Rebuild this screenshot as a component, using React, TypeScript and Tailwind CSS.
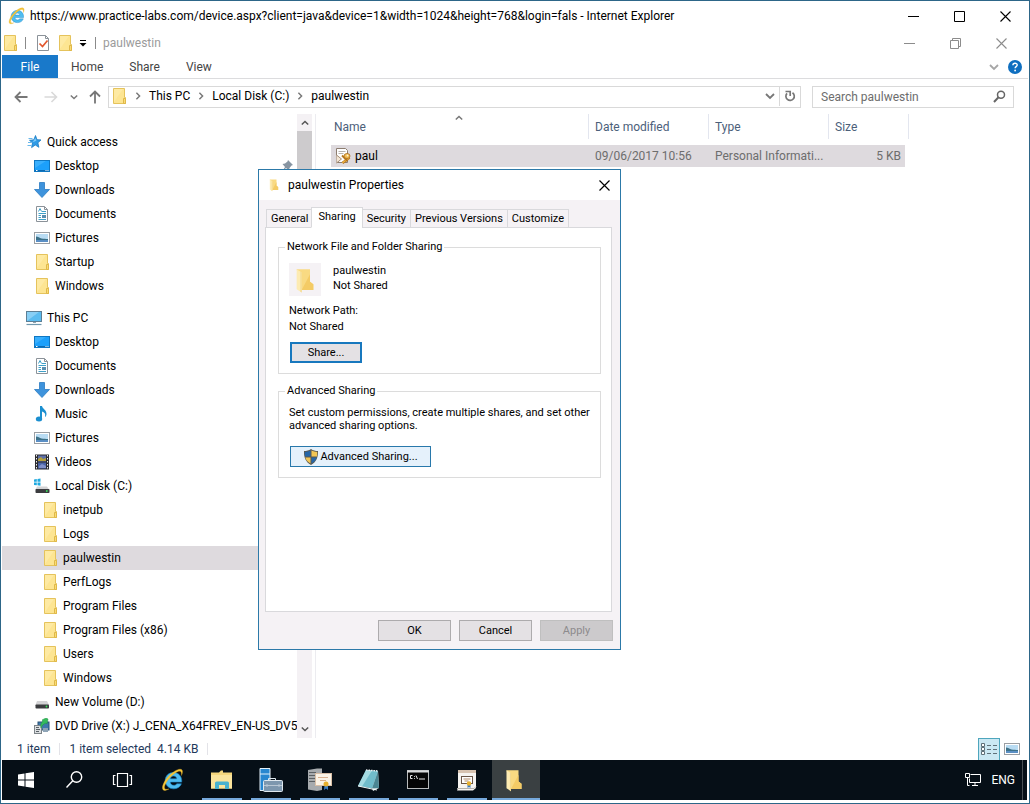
import { useState, type ReactNode } from 'react';
import clsx from 'clsx';

type IconName =
  | 'star'
  | 'desktop'
  | 'download'
  | 'document'
  | 'picture'
  | 'folder'
  | 'pc'
  | 'music'
  | 'video'
  | 'osdisk'
  | 'disk'
  | 'dvd';

type TreeItem = {
  id: string;
  label: string;
  icon: IconName;
  level: 0 | 1 | 2;
  pinned?: boolean;
};

const quickAccess: TreeItem[] = [
  { id: 'quick', label: 'Quick access', icon: 'star', level: 0 },
  { id: 'q-desktop', label: 'Desktop', icon: 'desktop', level: 1, pinned: true },
  { id: 'q-downloads', label: 'Downloads', icon: 'download', level: 1, pinned: true },
  { id: 'q-documents', label: 'Documents', icon: 'document', level: 1, pinned: true },
  { id: 'q-pictures', label: 'Pictures', icon: 'picture', level: 1, pinned: true },
  { id: 'q-startup', label: 'Startup', icon: 'folder', level: 1 },
  { id: 'q-windows', label: 'Windows', icon: 'folder', level: 1 },
];

const thisPc: TreeItem[] = [
  { id: 'pc', label: 'This PC', icon: 'pc', level: 0 },
  { id: 'desktop', label: 'Desktop', icon: 'desktop', level: 1 },
  { id: 'documents', label: 'Documents', icon: 'document', level: 1 },
  { id: 'downloads', label: 'Downloads', icon: 'download', level: 1 },
  { id: 'music', label: 'Music', icon: 'music', level: 1 },
  { id: 'pictures', label: 'Pictures', icon: 'picture', level: 1 },
  { id: 'videos', label: 'Videos', icon: 'video', level: 1 },
  { id: 'c', label: 'Local Disk (C:)', icon: 'osdisk', level: 1 },
  { id: 'inetpub', label: 'inetpub', icon: 'folder', level: 2 },
  { id: 'logs', label: 'Logs', icon: 'folder', level: 2 },
  { id: 'paulwestin', label: 'paulwestin', icon: 'folder', level: 2 },
  { id: 'perflogs', label: 'PerfLogs', icon: 'folder', level: 2 },
  { id: 'pf', label: 'Program Files', icon: 'folder', level: 2 },
  { id: 'pf86', label: 'Program Files (x86)', icon: 'folder', level: 2 },
  { id: 'users', label: 'Users', icon: 'folder', level: 2 },
  { id: 'windows', label: 'Windows', icon: 'folder', level: 2 },
  { id: 'd', label: 'New Volume (D:)', icon: 'disk', level: 1 },
  { id: 'x', label: 'DVD Drive (X:) J_CENA_X64FREV_EN-US_DV5', icon: 'dvd', level: 1 },
];

const iconShapes: Record<IconName, ReactNode> = {
  star: (
    <>
      <path d="M9.500 1.500l1.500 4.200 4 .2-3.100 2.900 1 4.500-3.600-2.300-3.700 2.600.9-4.600-3-2.700 4.300-.5z" fill="#2f9be6" stroke="#1c7cc4" strokeWidth=".8" />
      <path d="M2.500 4.500h4M2 8.500h3M1.500 11.500h4" stroke="#67b7ea" />
      <path d="M9.400 4l1 2.700-3.800 1.500z" fill="#7cc8f5" />
    </>
  ),
  desktop: (
    <>
      <rect x=".5" y="2.500" width="15" height="11" fill="#1ca0fb" stroke="#0f77c2" />
      <path d="M1 10L12 3H1z" fill="#4db9ff" opacity=".6" />
      <path d="M1 12.500h14" stroke="#0a6ab3" />
      <path d="M2 12.500h1.500M11.500 12.500h1M13.500 12.500h1" stroke="#fff" />
    </>
  ),
  download: <path d="M5.500.5h5v7h5L8 15.500.500 7.500h5z" fill="#3e93dc" stroke="#2b7bc1" strokeWidth=".8" />,
  document: (
    <>
      <path d="M2.500.5h8l3 3v12h-11z" fill="#fff" stroke="#8b9299" />
      <path d="M10.500.5v3h3" fill="none" stroke="#8b9299" />
      <path d="M4.500 5.500l1.500-3 1.500 3M8 5.500h4M4.500 7.500H12M4.500 9.500H7M4.500 11.500H7M4.500 13.500H12" fill="none" stroke="#3fa0c8" />
      <rect x="8" y="9" width="4" height="3" fill="#5a8fb0" />
    </>
  ),
  picture: (
    <>
      <rect x=".5" y="2.500" width="15" height="11" fill="#fff" stroke="#9a9ea3" />
      <rect x="2" y="4" width="12" height="8" fill="#b9dcf3" />
      <path d="M2 6.500c2 0 3.500 1.500 5.500 2 2 .4 4.500.3 6.500.5v1.500H2z" fill="#3c7188" />
      <path d="M2 10h12v2H2z" fill="#5b8fc4" />
    </>
  ),
  folder: (
    <>
      <path d="M2.500.5h11v9h1v6h-12z" fill="#fde592" stroke="#e5c35c" />
      <path d="M12.500 10.500h2v5h-2z" fill="#fbdc74" stroke="#dfb84a" />
      <path d="M3 14L12 1H3z" fill="#fff0b4" opacity=".5" />
    </>
  ),
  pc: (
    <>
      <rect x=".5" y="1.500" width="15" height="10" fill="#5bbcf0" stroke="#5d7f95" />
      <path d="M1 11L13 2H1z" fill="#a6dcf8" opacity=".6" />
      <path d="M7 12.500h3" stroke="#8ea4b1" />
      <path d="M.5 14.500h15" stroke="#6f97ad" strokeWidth="1.200" />
    </>
  ),
  music: (
    <>
      <ellipse cx="5" cy="13" rx="3.200" ry="2.500" fill="#1b8fd0" />
      <path d="M6 0h2c.5 3 5 4 4.500 8.500C12 11 11 11 11 10.500 12 7 9.500 6 8 5.500V13H6z" fill="#1b8fd0" />
    </>
  ),
  video: (
    <>
      <rect x="1" y=".5" width="14" height="15" fill="#2b2b2f" />
      <rect x="4" y="1.500" width="8" height="6" fill="#5d6fa8" />
      <rect x="4" y="8.500" width="8" height="6" fill="#4a63a5" />
      <path d="M4 5l3-2 2 2 3-1v3H4z" fill="#b5a03a" />
      <path d="M5 12l3-2 4 2v2H5z" fill="#7f8fc9" />
      <path d="M2.500 1v15M13.500 1v15" stroke="#f0f0f0" strokeDasharray="1.500 1.500" />
    </>
  ),
  osdisk: (
    <>
      <path d="M0 1.500l2.800-.5v2.800H0zM3.500 1l3-.5v3.300h-3zM0 4.500h2.800v2.800L0 6.900zM3.500 4.500h3v3.200l-3-.4z" fill="#1fa9df" />
      <path d="M3 8.500h10l2 3H1.500z" fill="#d3d3d5" />
      <rect x="1.500" y="11" width="14" height="4" rx=".8" fill="#3b3c3f" />
      <circle cx="12.800" cy="13" r=".9" fill="#39e05b" />
    </>
  ),
  disk: (
    <>
      <path d="M3 7h10l2 4H1.500z" fill="#d3d3d5" />
      <rect x="1.500" y="10.500" width="13.500" height="4" rx=".8" fill="#3b3c3f" />
      <circle cx="12.500" cy="12.500" r=".9" fill="#39e05b" />
    </>
  ),
  dvd: (
    <>
      <rect x="4" y="4" width="11" height="8" fill="#3f78ab" stroke="#2b5378" />
      <rect x="9" y="10" width="5" height="4" fill="#8ea4b6" />
      <rect x=".5" y="7.500" width="7" height="8" fill="#dcdfe1" stroke="#7d8489" />
      <path d="M2 9.500h3M2 11.500h4M2 13.500h3" stroke="#596066" />
      <path d="M12 0L8 2l1 1c-2 2-3 4-2 7 1-3 3-4 5-5l1 1 1-5z" fill="#35bb5c" stroke="#1f9244" strokeWidth=".5" />
    </>
  ),
};

function Icon({ name }: { name: IconName }) {
  return (
    <svg viewBox="0 0 16 16" className="h-4 w-4 shrink-0" aria-hidden="true">
      {iconShapes[name]}
    </svg>
  );
}

function IeLogo({ className }: { className: string }) {
  return (
    <svg viewBox="0 0 24 24" className={className} aria-hidden="true">
      <path
        d="M12.500 4.500c-4.800 0-8.300 3.500-8.300 8s3.500 8.300 8.500 8.300c3.600 0 6.500-1.800 7.700-5h-4.700c-.6 1-1.600 1.500-2.900 1.500-2 0-3.400-1.200-3.500-3.200h11.400c.5-5.600-3-9.600-8.200-9.600zM9.400 10.800c.3-1.700 1.500-2.700 3.200-2.700s2.900 1 3.100 2.700z"
        fill="#4fbdf0"
        stroke="#1a86c9"
        strokeWidth=".6"
      />
      <path
        d="M20.500 7.500c1.600-3.300 1.300-5.600-.4-6.200-2.500-.8-7.600 1.800-12 6.300C3.300 12.500.5 18.500 1.700 21.200c.9 1.900 3.500 1.400 6.300-.3-2.100.6-3.800.6-4.300-.5-.8-1.900 1.300-6.500 5.300-10.900 3.900-4.200 8.300-6.800 10.200-6.200 1.100.4 1.500 1.900 1.300 4.200z"
        fill="#f5c63a"
        stroke="#d9a520"
        strokeWidth=".3"
      />
    </svg>
  );
}

function OpenFolder({ className }: { className: string }) {
  return (
    <svg viewBox="0 0 24 32" className={className} aria-hidden="true">
      <path d="M2 3h16v15l4 3v7H7z" fill="#f9da82" />
      <path d="M8 28L18 9v9l4 3v7z" fill="#f4cb65" />
      <path d="M2 3l6 4v24l-6-4z" fill="#fdebb2" />
      <path d="M8 7v24l-1.500-1V6z" fill="#f3d98f" />
    </svg>
  );
}

function Shield() {
  return (
    <svg viewBox="0 0 16 16" className="h-4 w-4" aria-hidden="true">
      <path d="M8 0c2 1.500 4.500 2 7 2 .3 6-1.500 11-7 14C2.500 13 .7 8 1 2c2.500 0 5-.5 7-2z" fill="#5c5a50" />
      <path d="M7.500 1.500v6H2c-.2-1.500-.3-3-.2-4.600 2-.1 4-.5 5.700-1.400z" fill="#2667a8" />
      <path d="M8.500 1.500c1.700.9 3.700 1.300 5.700 1.400.1 1.600 0 3.100-.2 4.600H8.500z" fill="#f2c655" />
      <path d="M2.200 8.500h5.300v6C4.700 13 3 11 2.200 8.500z" fill="#f2c655" />
      <path d="M13.800 8.500H8.500v6c2.800-1.500 4.500-3.500 5.300-6z" fill="#2667a8" />
    </svg>
  );
}

function Chevron({ dir, className }: { dir: 'up' | 'down' | 'right'; className: string }) {
  const d = { up: 'M1 7l4-4 4 4', down: 'M1 3l4 4 4-4', right: 'M3 1l4 4-4 4' }[dir];
  return (
    <svg viewBox="0 0 10 10" className={clsx('shrink-0', className)} aria-hidden="true">
      <path d={d} fill="none" stroke="currentColor" strokeWidth="1.800" />
    </svg>
  );
}

function WindowButtons({ restored }: { restored?: boolean }) {
  const cell = 'flex h-full w-[46px] items-center justify-center';
  return (
    <div className={clsx('ml-auto flex h-full', restored ? 'mr-1 text-[#8c8c8c]' : 'text-black')}>
      <button className={cell} aria-label="Minimize">
        <svg viewBox="0 0 11 11" className="h-[11px] w-[11px]">
          <path d="M0 5.500h11" stroke="currentColor" />
        </svg>
      </button>
      <button className={cell} aria-label={restored ? 'Restore' : 'Maximize'}>
        <svg viewBox="0 0 11 11" className="h-[11px] w-[11px]" fill="none" stroke="currentColor">
          {restored ? <path d="M.5 2.500h8v8h-8zM2.500 2.500v-2h8v8h-2" /> : <path d="M.5.5h10v10H.5z" />}
        </svg>
      </button>
      <button className={cell} aria-label="Close">
        <svg viewBox="0 0 11 11" className="h-[11px] w-[11px]">
          <path d="M.5.5l10 10M10.500.5l-10 10" stroke="currentColor" strokeWidth="1.100" />
        </svg>
      </button>
    </div>
  );
}

function TreeRow({ item, selected, onSelect }: { item: TreeItem; selected: boolean; onSelect: () => void }) {
  return (
    <li>
      <button
        onClick={onSelect}
        className={clsx(
          'flex h-6 w-full items-center gap-[5px] pr-1 text-left whitespace-nowrap',
          item.level === 0 && 'pl-6',
          item.level === 1 && 'pl-8',
          item.level === 2 && 'pl-10',
          selected && 'bg-[#dedade]',
        )}
      >
        <Icon name={item.icon} />
        <span>{item.label}</span>
        {item.pinned && (
          <svg viewBox="0 0 12 12" className="ml-auto h-3 w-3" aria-hidden="true">
            <path d="M7 0l5 5-1.500.5L8.500 8l-.5 2.500L5 8l-4 4 3-5L1.500 4 4 3.500 6.500 1.500z" fill="#8794a1" />
          </svg>
        )}
      </button>
    </li>
  );
}

function Toolbar() {
  return (
    <>
      <div className="flex h-6 items-center">
        <button aria-label="System menu"><Icon name="folder" /></button>
        <span className="ml-[7px] h-3 w-px bg-[#8a8a8a]" />
        <button aria-label="Properties" className="ml-[9px]">
          <svg viewBox="0 0 16 16" className="h-4 w-4">
            <path d="M2.500.5h8l3 3v12h-11z" fill="#fff" stroke="#8b9299" />
            <path d="M10.500.5v3h3" fill="none" stroke="#8b9299" />
            <path d="M4.500 8.500l3 3 5-6" fill="none" stroke="#e2562c" strokeWidth="1.700" />
          </svg>
        </button>
        <button aria-label="New folder" className="ml-[6px]"><Icon name="folder" /></button>
        <button aria-label="Customize toolbar" className="ml-[6px]">
          <svg viewBox="0 0 8 8" className="h-2 w-2">
            <path d="M1 1.500h6" stroke="#000" />
            <path d="M.5 4h7L4 7.500z" fill="#000" />
          </svg>
        </button>
        <span className="ml-2 h-3 w-px bg-[#8a8a8a]" />
        <span className="ml-[7px] text-[#9b9b9b]">paulwestin</span>
        <WindowButtons restored />
      </div>
      <nav className="flex h-6 items-stretch border-b border-[#dcdcde] pr-[6px] text-[#444]">
        <button className="w-14 bg-[#1979ca] text-white">File</button>
        <button className="px-[13px]">Home</button>
        <button className="px-[13px]">Share</button>
        <button className="px-[13px]">View</button>
        <button aria-label="Expand ribbon" className="ml-auto text-[#a6a6a6]"><Chevron dir="down" className="h-2.5 w-2.5" /></button>
        <button aria-label="Help" className="ml-[9px]">
          <svg viewBox="0 0 14 14" className="h-3.5 w-3.5">
            <circle cx="7" cy="7" r="7" fill="#0f6fc0" />
            <path d="M4.900 5.300c0-2.800 4.400-2.600 4.300-.2 0 1.500-2.100 1.600-2.100 3.200" fill="none" stroke="#fff" strokeWidth="1.400" />
            <circle cx="7.100" cy="10.500" r=".9" fill="#fff" />
          </svg>
        </button>
      </nav>
    </>
  );
}

function AddressBar() {
  return (
    <div className="flex h-[35px] items-center pr-[14px] pl-3 text-[#7a7a7a]">
      <button aria-label="Back">
        <svg viewBox="0 0 14 12" className="h-3 w-3.5" fill="none" stroke="#777" strokeWidth="1.800">
          <path d="M13.500 6H2M6.500 1l-5 5 5 5" />
        </svg>
      </button>
      <button aria-label="Forward" className="ml-4">
        <svg viewBox="0 0 14 12" className="h-3 w-3.5" fill="none" stroke="#d9d9d9" strokeWidth="1.600">
          <path d="M.5 6H12M7.500 1l5 5-5 5" />
        </svg>
      </button>
      <button aria-label="Recent locations" className="ml-3"><Chevron dir="down" className="h-2 w-2" /></button>
      <button aria-label="Up" className="ml-[11px]">
        <svg viewBox="0 0 12 14" className="h-3.5 w-3" fill="none" stroke="#777" strokeWidth="1.800">
          <path d="M6 13.500V2M1 6.500l5-5 5 5" />
        </svg>
      </button>
      <div className="ml-[7px] flex h-[22px] flex-1 items-center border border-[#d9d9d9] pb-px pl-[2px] text-black">
        <Icon name="folder" />
        <Chevron dir="right" className="mx-[7px] h-2 w-2 text-[#777]" />
        <button>This PC</button>
        <Chevron dir="right" className="mx-[7px] h-2 w-2 text-[#777]" />
        <button>Local Disk (C:)</button>
        <Chevron dir="right" className="mx-[7px] h-2 w-2 text-[#777]" />
        <button>paulwestin</button>
        <button aria-label="Previous locations" className="mr-1 ml-auto text-[#777]"><Chevron dir="down" className="h-2.5 w-2.5" /></button>
        <button aria-label="Refresh" className="flex h-5 w-[21px] items-center justify-center border-l border-[#d9d9d9]">
          <svg viewBox="0 0 12 12" className="h-3 w-3" fill="none" stroke="#777" strokeWidth="1.700">
            <path d="M8.500 2.800A4.200 4.200 0 1 1 3 3.400" />
            <path d="M1.500 1.500h4.700V6" />
          </svg>
        </button>
      </div>
      <label className="ml-[11px] flex h-[22px] w-[202px] items-center border border-[#d9d9d9] pr-[7px] pl-2">
        <input
          type="text"
          aria-label="Search"
          placeholder="Search paulwestin"
          className="min-w-0 flex-1 outline-none placeholder:text-[#6d6d6d]"
        />
        <svg viewBox="0 0 13 13" className="h-[13px] w-[13px]" fill="none" stroke="#666" strokeWidth="1.500">
          <circle cx="8" cy="4.800" r="3.500" />
          <path d="M5.500 7.300L1 12" strokeWidth="2" />
        </svg>
      </label>
    </div>
  );
}

function FileTable() {
  const head = 'flex h-[25px] items-center border-r border-[#e3e6ef]';
  return (
    <table className="w-[577px] table-fixed border-separate border-spacing-0 text-left">
      <colgroup>
        <col className="w-[258px]" />
        <col className="w-[120px]" />
        <col className="w-[120px]" />
        <col className="w-[80px]" />
      </colgroup>
      <thead className="text-[#4c607a]">
        <tr>
          <th className="relative p-0 pb-[6px] font-normal">
            <div className={clsx(head, 'pl-[3px]')}>Name</div>
            <Chevron dir="up" className="absolute top-0 left-[124px] h-2 w-2 text-[#777]" />
          </th>
          <th className="p-0 pb-[6px] font-normal"><div className={clsx(head, 'pl-[6px]')}>Date modified</div></th>
          <th className="p-0 pb-[6px] font-normal"><div className={clsx(head, 'pl-[6px]')}>Type</div></th>
          <th className="p-0 pb-[6px] font-normal"><div className={clsx(head, 'pl-[6px]')}>Size</div></th>
        </tr>
      </thead>
      <tbody>
        <tr className="h-[22px] text-[#6d6d6d] [&>td]:bg-[#dedade] [&>td]:p-0">
          <td>
            <span className="flex items-center gap-1 pl-1 text-black">
              <svg viewBox="0 0 16 16" className="h-4 w-4" aria-hidden="true">
                <path d="M1.500.5h9l2 2v12h-11z" fill="#fff" stroke="#8c7d70" />
                <path d="M3.500 3.500h7M3.500 5.500h5" stroke="#b9b4ae" />
                <path d="M1.500 7l5 4-5 4" fill="#f3e6d5" stroke="#a58c74" />
                <path d="M14.500 9.500L7.500 15" stroke="#b5761d" strokeWidth="2.600" />
                <path d="M14 10L7.500 14.700" stroke="#f0b648" strokeWidth="1.200" />
                <path d="M7 7.500l5.500 5.500" stroke="#b5761d" strokeWidth="1.800" />
                <ellipse cx="12" cy="8" rx="3" ry="2.500" fill="#f3be55" stroke="#a8691a" strokeWidth=".8" />
                <circle cx="12.500" cy="7.500" r=".9" fill="#fff2d0" />
              </svg>
              paul
            </span>
          </td>
          <td><span className="pl-[6px]">09/06/2017 10:56</span></td>
          <td><span className="pl-[6px]">Personal Informati...</span></td>
          <td className="border-r-4 border-transparent bg-clip-padding text-right"><span className="pr-1">5 KB</span></td>
        </tr>
      </tbody>
    </table>
  );
}

const tabs = ['General', 'Sharing', 'Security', 'Previous Versions', 'Customize'];

function PropertiesDialog() {
  const [tab, setTab] = useState('Sharing');
  const button = 'h-[21px] w-[73px] border';
  return (
    <section
      role="dialog"
      aria-label="paulwestin Properties"
      className="absolute top-[55px] left-64 w-[363px] border border-[#2c79a8] bg-[#f5f2f5] text-[11px] leading-[15px] text-black"
    >
      <header className="flex h-[30px] items-center bg-white px-[10px] text-[12px]">
        <OpenFolder className="h-3.5 w-2.5" />
        <h2 className="ml-[9px]">paulwestin Properties</h2>
        <button aria-label="Close" className="ml-auto">
          <svg viewBox="0 0 11 11" className="h-[11px] w-[11px]">
            <path d="M.5.5l10 10M10.500.5l-10 10" stroke="#000" strokeWidth="1.200" />
          </svg>
        </button>
      </header>
      <div className="pt-[7px] pr-2 pb-2 pl-[6px]">
        <div role="tablist" className="relative z-10 -mb-px flex items-end px-px">
          {tabs.map((name) => (
            <button
              key={name}
              role="tab"
              aria-selected={tab === name}
              onClick={() => setTab(name)}
              className={clsx(
                'border border-[#d9d9dc]',
                tab === name ? '-mx-px h-[21px] border-b-white bg-white px-[6px] pb-[2px]' : 'h-[19px] px-1 not-last:border-r-0',
              )}
            >
              {name}
            </button>
          ))}
        </div>
        <div role="tabpanel" className="flex h-[385px] flex-col gap-[10px] border border-[#d9d9dc] bg-white pt-3 pr-[10px] pl-3">
          <fieldset className="border border-[#dcdcdc] px-[10px] pb-[10px]">
            <legend className="-ml-1 px-[2px] leading-[14px]">Network File and Folder Sharing</legend>
            <div className="mt-[9px] flex items-start gap-3">
              <div className="flex h-[33px] w-8 items-center justify-center bg-[#f5f2f5]">
                <OpenFolder className="h-7 w-5" />
              </div>
              <p>
                paulwestin
                <br />
                Not Shared
              </p>
            </div>
            <p className="mt-[7px] leading-4">
              Network Path:
              <br />
              Not Shared
            </p>
            <button className="mt-[7px] ml-px h-[21px] w-[72px] border-2 border-[#1878be] bg-[#e4e1e4]">Share...</button>
          </fieldset>
          <fieldset className="border border-[#dcdcdc] px-[10px] pb-[10px]">
            <legend className="-ml-1 px-[2px] leading-[14px]">Advanced Sharing</legend>
            <p className="mt-2 leading-[13px]">Set custom permissions, create multiple shares, and set other advanced sharing options.</p>
            <button className="mt-[14px] ml-px flex h-[21px] w-[141px] items-center justify-center gap-px border border-[#2878ab] bg-[#e5f1fb]">
              <Shield />
              Advanced Sharing...
            </button>
          </fieldset>
        </div>
        <div className="-mr-px mt-2 flex justify-end gap-2">
          <button className={clsx(button, 'border-[#adabad] bg-[#e4e1e4]')}>OK</button>
          <button className={clsx(button, 'border-[#adabad] bg-[#e4e1e4]')}>Cancel</button>
          <button disabled className={clsx(button, 'border-[#bfbfbf] bg-[#cccacc] text-[#8d8b8d]')}>Apply</button>
        </div>
      </div>
    </section>
  );
}

function StatusBar() {
  return (
    <footer className="flex h-[22px] items-center pr-2 pl-[15px] text-[#1e395b]">
      <span>1 item</span>
      <span className="mx-[9px] h-3 w-px bg-[#e3e3e8]" />
      <span>1 item selected</span>
      <span className="ml-[6px]">4.14 KB</span>
      <span className="ml-[9px] h-3 w-px bg-[#e3e3e8]" />
      <button aria-label="Details view" className="ml-auto flex h-[23px] w-[22px] items-center justify-center border border-[#4ea6bd] bg-[#cbe8f3]">
        <svg viewBox="0 0 16 13" className="h-[13px] w-4" fill="none" stroke="#5f7079">
          <path d="M.5.5h3v3h-3zM.5 4.500h3v3h-3zM.5 8.500h3v3h-3z" fill="#fff" />
          <path d="M6 2.500h4M12 2.500h4M6 6.500h4M12 6.500h4M6 10.500h4M12 10.500h4" />
        </svg>
      </button>
      <button aria-label="Thumbnail view" className="ml-1"><Icon name="picture" /></button>
    </footer>
  );
}

type TaskItem = { name: string; state?: 'running' | 'active'; art: ReactNode };

const taskItems: TaskItem[] = [
  {
    name: 'Start',
    art: <path d="M4 6.500l6.500-1v6H4zM11.500 5.300L20 4v7.500h-8.500zM4 12.500h6.500v6l-6.500-1zM11.500 12.500H20V20l-8.500-1.300z" fill="#fff" />,
  },
  {
    name: 'Search',
    art: (
      <g fill="none" stroke="#fff" strokeWidth="1.400">
        <circle cx="13.500" cy="9" r="5.200" />
        <path d="M9.800 12.700L3.500 19.500" />
      </g>
    ),
  },
  {
    name: 'Task View',
    art: <path d="M5.500 5.500h10v13h-10zM3.500 7.500h-2v9h2M17.500 7.500h2v9h-2" fill="none" stroke="#fff" strokeWidth="1.200" />,
  },
  { name: 'Internet Explorer', art: <IeLogo className="h-6 w-6" /> },
  {
    name: 'File Explorer',
    state: 'running',
    art: (
      <>
        <path d="M1 4.500h8l2-2h2v2h9v16H1z" fill="#f5d67c" />
        <path d="M1 7h21v13.500H1z" fill="#fbe49c" />
        <path d="M5 21v-6q0-1.500 1.500-1.500h11q1.500 0 1.500 1.500v6h-4v-4h-6v4z" fill="#49b2cf" />
      </>
    ),
  },
  {
    name: 'Server Manager',
    state: 'running',
    art: (
      <>
        <path d="M1 .5h10v22H1z" fill="#2787d0" stroke="#e3f1fb" />
        <path d="M1 6h10" stroke="#e3f1fb" />
        <path d="M9.500 12.500v-2h7v2" fill="none" stroke="#dfe8ef" />
        <rect x="4.500" y="12.500" width="19" height="11" rx="1" fill="#7d97ae" stroke="#dfe8ef" />
        <path d="M5 17.500h18M8 16v3M20 16v3" stroke="#b9c7d4" />
      </>
    ),
  },
  {
    name: 'Certification Authority',
    state: 'running',
    art: (
      <>
        <path d="M0 2l9-1.500h5V22L9 23l-9-1.500z" fill="#a7abae" />
        <path d="M1 4.500h7M1 7.500h7M1 10.500h7M1 13.500h7" stroke="#5c6164" />
        <rect x="7.500" y="5.500" width="16" height="12" fill="#fbf3e6" stroke="#d9bfa6" />
        <path d="M10 9.500h10M12 12.500h6" stroke="#d9b08e" />
        <path d="M16.500 17l-.5 5 2-1.500 2 1.500V17z" fill="#3a7cc4" />
        <circle cx="18" cy="16" r="2.500" fill="#e8b02c" />
      </>
    ),
  },
  {
    name: 'Notepad',
    state: 'running',
    art: (
      <>
        <path d="M9 2l12 1 1 17-6 3z" fill="#dfe9ea" />
        <path d="M9 2l12 1-6 17.500L1 18z" fill="#70bccb" />
        <path d="M9 2l6 .5L5 18.500 1 18z" fill="#a4dbe3" />
        <path d="M21 3l1 17-7 .5z" fill="#4a8592" />
        <path d="M9 2l12 1" stroke="#e8eef0" strokeWidth="1.500" strokeDasharray="1.500 1" />
        <path d="M1 18l14 3 5 1" stroke="#f4f8f8" fill="none" />
      </>
    ),
  },
  {
    name: 'Command Prompt',
    state: 'running',
    art: (
      <>
        <rect x="1.500" y="2.500" width="21" height="18" fill="#050505" stroke="#b8babb" />
        <path d="M1 3.500h22" stroke="#d8dadb" strokeWidth="2" />
        <path d="M6.500 7.500h-2v3h2M8.500 8v.8M8.500 10v.8M10 7.500l1.500 3.500M13 11h6" stroke="#e8e8e8" fill="none" />
      </>
    ),
  },
  {
    name: 'Certificates',
    state: 'running',
    art: (
      <>
        <path d="M3 2h18v18l-3 2.500H2L3 20z" fill="#f6f4f1" />
        <path d="M3 2h18v3H3z" fill="#d7c3b1" />
        <path d="M2 20.500h17l2-2" stroke="#b5b1ac" fill="none" />
        <rect x="6.500" y="8.500" width="11" height="7" fill="#fff" stroke="#6a5648" />
        <path d="M8.500 11h7M9.500 13h4" stroke="#b08b6b" />
        <path d="M12.500 16v4l1.500-1 1.500 1v-4z" fill="#3a7cc4" />
        <circle cx="14" cy="15.500" r="2.200" fill="#e8b02c" />
      </>
    ),
  },
  { name: 'paulwestin', state: 'active', art: <OpenFolder className="h-6 w-5" /> },
];

function Taskbar() {
  return (
    <div className="mr-px mb-[3px] flex h-10 gap-px bg-[#060f17] text-white">
      {taskItems.map((task) => (
        <button
          key={task.name}
          aria-label={task.name}
          className={clsx('relative flex w-12 items-center justify-center', task.state === 'active' && 'bg-[#3a4042]')}
        >
          <svg viewBox="0 0 24 24" className="h-6 w-6">{task.art}</svg>
          {task.state && (
            <span className={clsx('absolute bottom-0 h-[2px] bg-[#76a9dc]', task.state === 'active' ? 'inset-x-0' : 'inset-x-1')} />
          )}
        </button>
      ))}
      <div className="ml-auto flex items-center">
        <svg viewBox="0 0 16 14" className="h-3.5 w-4" fill="none" stroke="#fff" aria-label="Network">
          <path d="M5.500 1.500h10v8h-11v-4M10 9.500v3M7 12.500h6M.5.5h4v4h-4zM2.500 4.500v8h2" />
        </svg>
        <button className="ml-[10px]">ENG</button>
        <span className="mr-1 ml-[7px] h-full w-px bg-[#4a5055]" />
      </div>
    </div>
  );
}

export default function App() {
  const [selected, setSelected] = useState('paulwestin');
  const renderRow = (item: TreeItem) => (
    <TreeRow key={item.id} item={item} selected={selected === item.id} onSelect={() => setSelected(item.id)} />
  );

  return (
    <div className="flex min-h-screen flex-col border border-[#2d6688] bg-white px-px font-[Roboto,'Noto_Sans',sans-serif] text-[12px] leading-4 text-black">
      <header className="flex h-[30px] items-center">
        <IeLogo className="ml-[6px] h-[18px] w-[18px]" />
        <h1 className="ml-1 whitespace-nowrap">
          https://www.practice-labs.com/device.aspx?client=java&amp;device=1&amp;width=1024&amp;height=768&amp;login=fals - Internet Explorer
        </h1>
        <WindowButtons />
      </header>
      <Toolbar />
      <AddressBar />
      <main className="relative flex flex-1">
        <nav className="w-[295px] pt-4">
          <ul>{quickAccess.map(renderRow)}</ul>
          <ul className="mt-2">{thisPc.map(renderRow)}</ul>
        </nav>
        <div className="mr-[3px] flex w-[15px] flex-col items-center bg-[#f4f1f4] text-[#555]">
          <span className="flex h-[17px] items-center"><Chevron dir="up" className="h-2 w-2" /></span>
          <span className="h-[360px] w-full bg-[#cdcbcd]" />
          <Chevron dir="down" className="mt-auto mb-[5px] h-2 w-2" />
        </div>
        <div className="flex-1 border-l border-[#ececf0] pl-[15px]">
          <FileTable />
        </div>
        <PropertiesDialog />
      </main>
      <StatusBar />
      <Taskbar />
    </div>
  );
}
